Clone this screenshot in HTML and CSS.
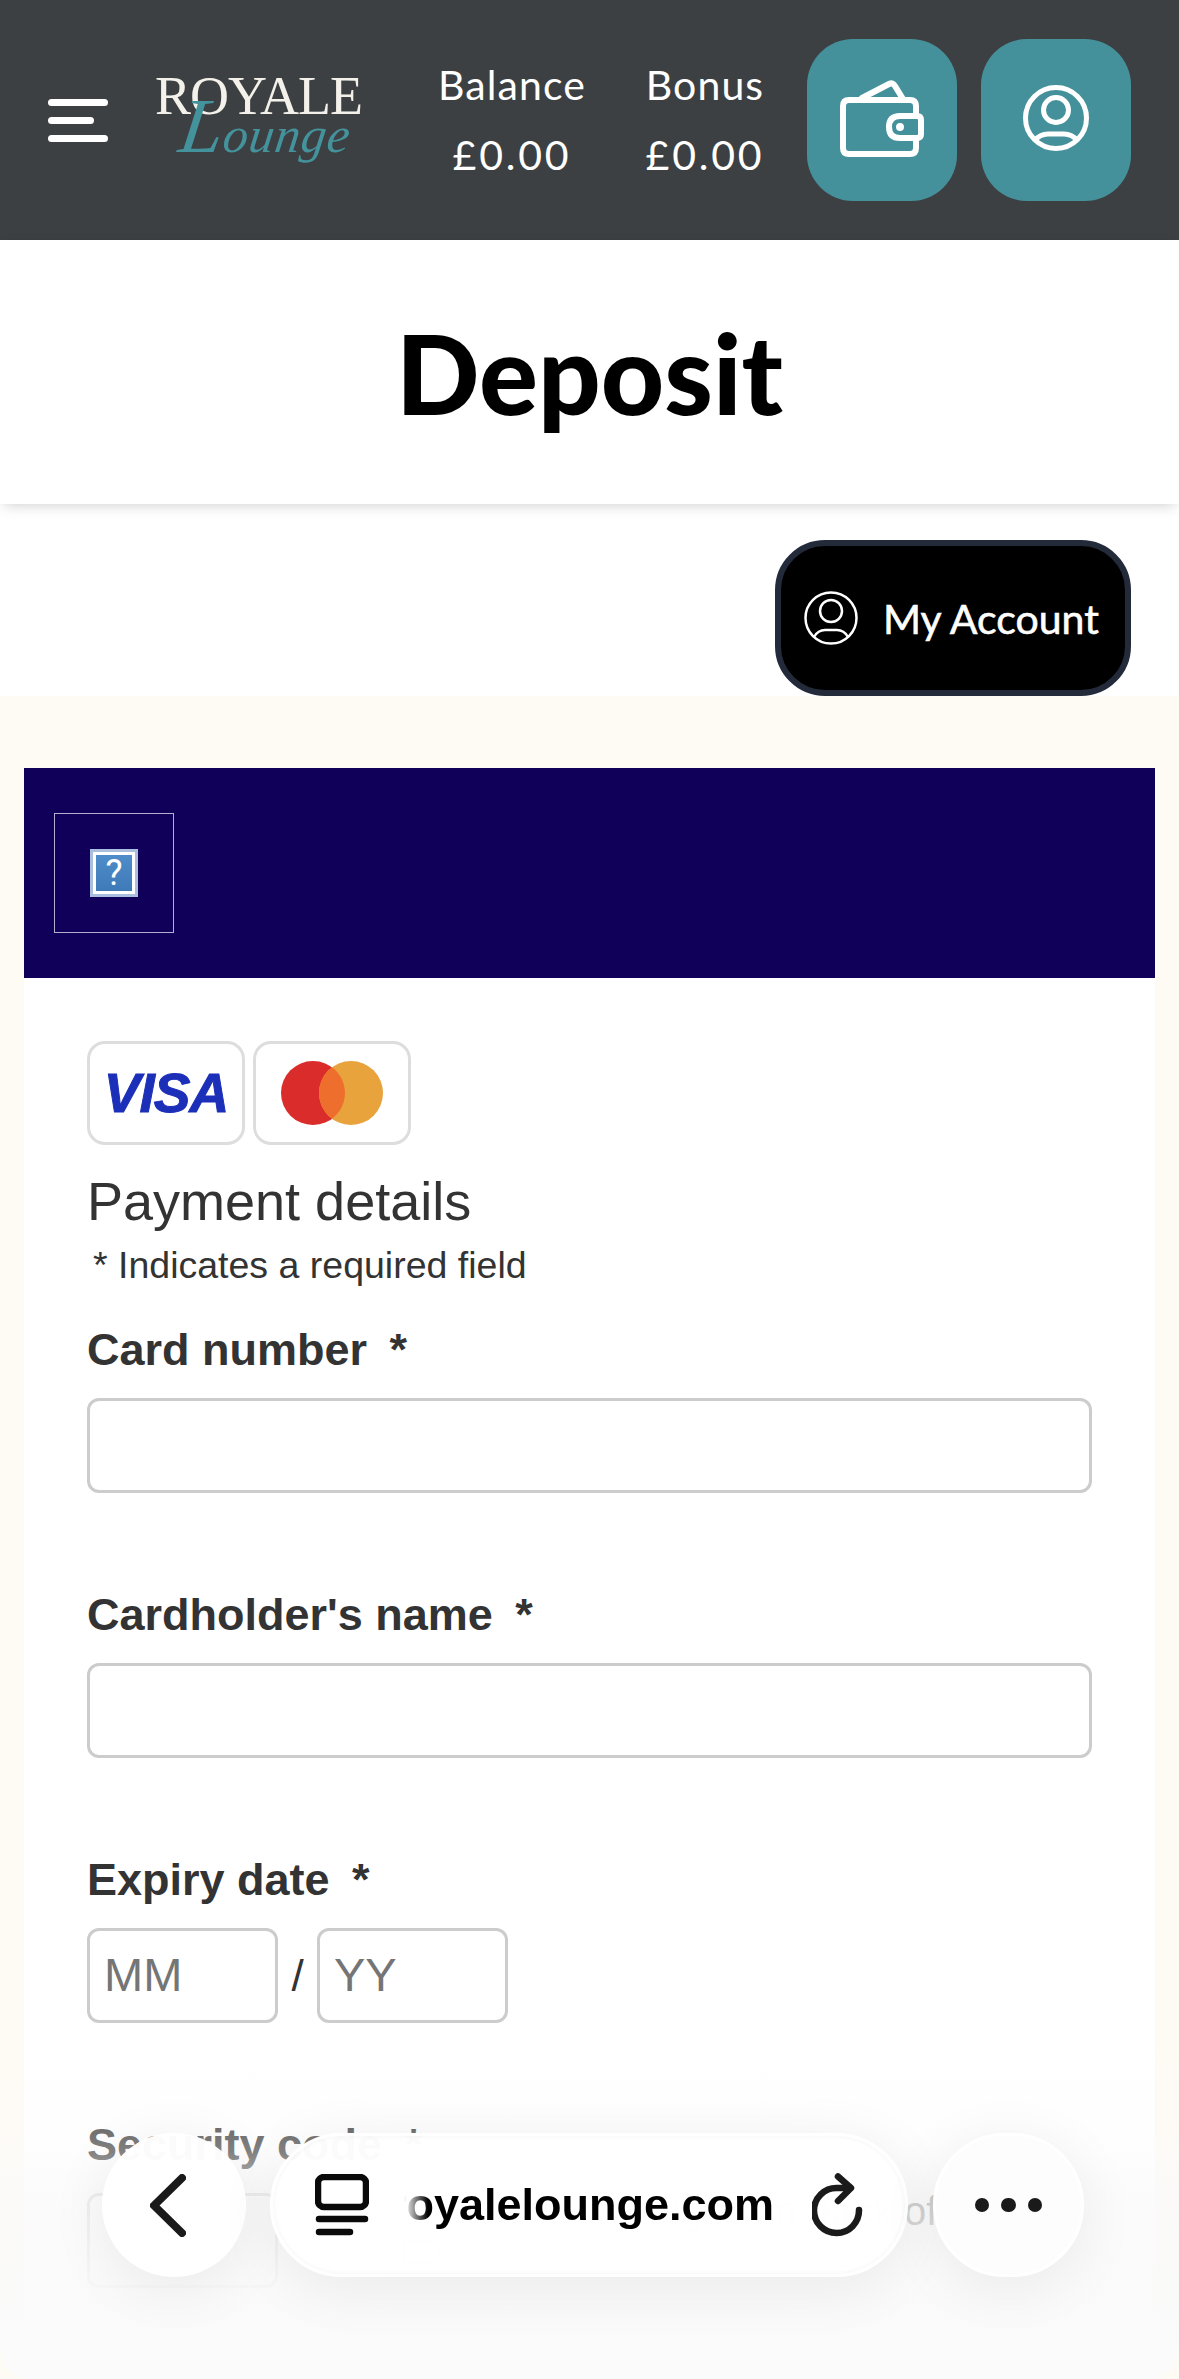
FILE: index.html
```html
<!DOCTYPE html>
<html lang="en">
	<head>
		<meta charset="utf-8">
		<meta name="viewport" content="width=device-width, initial-scale=1">
		<title>Deposit - Royale Lounge</title>
		<link rel="stylesheet" href="styles.css">
	</head>
	<body>
		<header class="topbar">
			<button class="burger" aria-label="Menu"><i></i><i class="short"></i><i></i></button>
			<div class="logo">
				<span class="logo-top">ROYALE</span>
				<span class="logo-sub">Lounge</span>
			</div>
			<div class="money">
				<span>Balance</span>
				<span class="amount">£0.00</span>
			</div>
			<div class="money money-bonus">
				<span>Bonus</span>
				<span class="amount">£0.00</span>
			</div>
			<a class="tile tile-wallet" href="#" aria-label="Wallet">
				<svg width="84" height="78" viewBox="0 0 84 78" fill="none" stroke="#fff" stroke-width="6" stroke-linejoin="round" stroke-linecap="round">
					<path d="M22 18 L49 4 Q53 2 55 6 L63 19"/>
					<path d="M76 36 V26 Q76 20 70 20 H9 Q3 20 3 26 V68 Q3 74 9 74 H70 Q76 74 76 68 V58"/>
					<path d="M60 36 H77 Q81 36 81 40 V54 Q81 58 77 58 H60 Q49 58 49 47 Q49 36 60 36 Z"/>
					<circle cx="60" cy="47" r="2" fill="#fff" stroke-width="4"/>
				</svg>
			</a>
			<a class="tile tile-user" href="#" aria-label="Account">
				<svg width="66" height="68" viewBox="0 0 66 68" fill="none" stroke="#fff" stroke-width="5">
					<circle cx="33" cy="34" r="30.500"/>
					<ellipse cx="33" cy="26" rx="12.500" ry="12.500"/>
					<path d="M11 57 Q17 50 25 50 H41 Q49 50 55 57"/>
				</svg>
			</a>
		</header>

		<section class="title">
			<h1>Deposit</h1>
		</section>

		<div class="account-row">
			<a class="account-btn" href="#">
				<svg width="54" height="54" viewBox="0 0 54 54" fill="none" stroke="#fff" stroke-width="2.500">
					<circle cx="27" cy="27" r="25.500"/>
					<circle cx="27" cy="20" r="11"/>
					<path d="M10 46 Q14 39 21 39 H33 Q40 39 44 46"/>
				</svg>
				My Account
			</a>
		</div>

		<main class="page">
			<div class="merchant">
				<div class="merchant-logo">
					<span class="broken-img">?</span>
				</div>
			</div>
			<div class="card">
				<div class="schemes">
					<span class="scheme"><span class="visa">VISA</span></span>
					<span class="scheme">
						<svg width="104" height="68" viewBox="0 0 104 68">
							<circle cx="33" cy="34" r="32" fill="#d92c2b"/>
							<circle cx="71" cy="34" r="32" fill="#e9a33c"/>
							<path d="M52 8.300 A32 32 0 0 1 52 59.700 A32 32 0 0 1 52 8.300 Z" fill="#ee6e2d"/>
						</svg>
					</span>
				</div>
				<h2>Payment details</h2>
				<p class="required-note">* Indicates a required field</p>
				<form>
					<div class="field">
						<label class="label" for="card">Card number <span class="star">*</span></label>
						<input class="input" id="card" type="text">
					</div>
					<div class="field">
						<label class="label" for="holder">Cardholder's name <span class="star">*</span></label>
						<input class="input" id="holder" type="text">
					</div>
					<div class="field">
						<label class="label" for="mm">Expiry date <span class="star">*</span></label>
						<div class="inline-inputs">
							<input class="input input-short" id="mm" type="text" placeholder="MM">
							<span class="slash">/</span>
							<input class="input input-short" type="text" placeholder="YY">
						</div>
					</div>
					<div class="field">
						<label class="label" for="cvv">Security code <span class="star">*</span></label>
						<div class="inline-inputs cvv-row">
							<input class="input input-short" id="cvv" type="text">
							<span class="cvv-mark"></span>
							<span class="cvv-hint">3 digits on back of card</span>
						</div>
					</div>
				</form>
			</div>
		</main>

		<!-- browser toolbar floating over the page -->
		<div class="fade"></div>
		<nav class="toolbar">
			<button class="round round-back" aria-label="Back">
				<svg width="36" height="63" viewBox="0 0 36 63" fill="none" stroke="#1a1a1a" stroke-width="8" stroke-linecap="round" stroke-linejoin="round">
					<path d="M32 4 L4 31.500 L32 59"/>
				</svg>
			</button>
			<div class="urlbar">
				<svg class="tabs-icon" width="54" height="62" viewBox="0 0 54 62" fill="none" stroke="#0a0a0a" stroke-width="6.500" stroke-linecap="round" stroke-linejoin="round">
					<rect x="3" y="3" width="48" height="30" rx="6"/>
					<path d="M4 45 H50 M4 58 H35"/>
				</svg>
				<span class="url"><span>royalelounge.com</span></span>
				<svg class="reload" width="52" height="64" viewBox="0 0 52 64" fill="none" stroke="#1a1a1a" stroke-width="6.500" stroke-linecap="round" stroke-linejoin="round">
					<path d="M47 37 A22.500 22.500 0 1 1 25 15 H36"/>
					<path d="M26 3.500 L39 15 L26 28"/>
				</svg>
			</div>
			<button class="round round-more" aria-label="More">
				<i></i><i></i><i></i>
			</button>
		</nav>
	</body>
</html>
```

FILE: styles.css
```css
* {
	box-sizing: border-box;
}

html, body {
	margin: 0;
	height: 2379px;
	overflow: hidden;
}

body {
	position: relative;
	background: #fff;
	font-family: "Liberation Sans", Arial, sans-serif;
	color: #333;
}

button {
	border: 0;
	padding: 0;
	background: none;
}

/* top bar */
.topbar {
	height: 240px;
	background: #3d4043;
	display: flex;
	align-items: center;
	padding: 0 48px;
	color: #fff;
}

.burger {
	width: 60px;
	display: flex;
	flex-direction: column;
	gap: 11px;
}

.burger i {
	display: block;
	height: 7px;
	border-radius: 4px;
	background: #fff;
}

.burger i.short {
	width: 46px;
}

.logo {
	width: 210px;
	height: 96px;
	margin-left: 47px;
	position: relative;
	margin-top: -2px;
	font-family: "Liberation Serif", serif;
}

.logo-top {
	display: block;
	font-size: 54px;
	line-height: 50px;
	letter-spacing: -1px;
	color: #f4f1ea;
}

.logo-sub {
	position: absolute;
	left: 25px;
	top: 25px;
	display: block;
	font-size: 50px;
	line-height: 60px;
	font-style: italic;
	letter-spacing: 1px;
	color: #44929c;
	transform: skewX(-8deg);
}

.logo-sub::first-letter {
	font-size: 78px;
}

.money {
	width: 150px;
	margin-left: 72px;
	display: flex;
	flex-direction: column;
	align-items: center;
	gap: 22px;
	font-family: Lato, sans-serif;
	font-size: 41px;
	line-height: 48px;
	letter-spacing: 1.100px;
}

.amount {
	letter-spacing: 2.800px;
}

.money-bonus {
	width: 118px;
	margin-left: 59px;
}

.tile {
	width: 150px;
	height: 162px;
	flex: none;
	border-radius: 46px;
	background: #45919b;
	display: flex;
	align-items: center;
	justify-content: center;
}

.tile-wallet {
	margin-left: 43px;
}

.tile-user {
	margin-left: 24px;
}

.tile svg {
	margin-bottom: 2px;
}

.tile-user svg {
	margin-bottom: 4px;
}

/* heading */
.title {
	height: 264px;
	background: #fff;
	display: flex;
	align-items: center;
	justify-content: center;
	box-shadow: 0 4px 14px -4px rgba(0, 0, 0, .22);
	position: relative;
}

.title h1 {
	margin: 0;
	font-family: Lato, sans-serif;
	font-weight: 900;
	font-size: 110px;
	line-height: 120px;
	color: #000;
}

.account-row {
	height: 192px;
	display: flex;
	justify-content: flex-end;
	align-items: flex-end;
	padding-right: 48px;
}

.account-btn {
	width: 356px;
	height: 156px;
	border: 6px solid #232a3a;
	border-radius: 50px;
	background: #000;
	color: #fff;
	display: flex;
	align-items: center;
	gap: 25px;
	padding-left: 23px;
	font-family: Lato, sans-serif;
	font-size: 41px;
	-webkit-text-stroke: .6px #fff;
	text-decoration: none;
}

/* payment page */
.page {
	height: 1683px;
	background: #fefaf4;
	padding: 72px 24px 0;
}

.merchant {
	height: 210px;
	background: #10005a;
	padding: 45px 30px;
}

.merchant-logo {
	width: 120px;
	height: 120px;
	border: 1px solid #b5b0d0;
	display: flex;
	align-items: center;
	justify-content: center;
}

.broken-img {
	width: 48px;
	height: 48px;
	border: 3px solid #a9bfdd;
	outline: 3px solid #fff;
	outline-offset: -6px;
	background: linear-gradient(#4f8fcb, #3d78b5);
	color: #fff;
	display: flex;
	align-items: center;
	justify-content: center;
	font: 36px Roboto, sans-serif;
}

.card {
	height: 1401px;
	background: #fff;
	padding: 63px 63px 0;
}

.schemes {
	display: flex;
	gap: 8px;
}

.scheme {
	width: 158px;
	height: 104px;
	border: 3px solid #ddd;
	border-radius: 18px;
	display: flex;
	align-items: center;
	justify-content: center;
}

.visa {
	font-weight: 700;
	font-style: italic;
	font-size: 55px;
	letter-spacing: -1px;
	color: #1c2fb8;
	-webkit-text-stroke: 1px #1c2fb8;
}

.card h2 {
	margin: 25px 0 0;
	font-weight: 400;
	font-size: 54px;
	line-height: 62px;
	color: #333;
}

.required-note {
	margin: 11px 0 0 6px;
	font-size: 37.500px;
	line-height: 44px;
}

.field {
	margin-bottom: 95px;
}

.field:first-child {
	margin-top: 36px;
}

.label {
	display: block;
	font-weight: 700;
	font-size: 45px;
	line-height: 54px;
	margin-bottom: 21px;
}

.star {
	margin-left: 10px;
}

.input {
	display: block;
	width: 100%;
	height: 95px;
	border: 3px solid #ccc;
	border-radius: 12px;
	background: #fff;
	padding: 0 14px 3px;
	font: 47px "Liberation Sans", Arial, sans-serif;
}

.input::placeholder {
	color: #757575;
	opacity: 1;
}

.inline-inputs {
	display: flex;
	align-items: center;
	position: relative;
}

.input-short {
	width: 191px;
	flex: none;
}

.slash {
	width: 39px;
	text-align: center;
	font-size: 44px;
}

.cvv-row {
	align-items: flex-start;
}

.cvv-mark {
	width: 36px;
	height: 22px;
	flex: none;
	margin: 48px 0 0 125px;
	border: 2px solid #e33;
}

.cvv-hint {
	margin: -4px 0 0 176px;
	font-size: 40px;
	line-height: 44px;
	color: #555;
	white-space: nowrap;
}

/* browser toolbar */
.fade {
	position: absolute;
	left: 0;
	right: 0;
	bottom: 0;
	height: 379px;
	border-radius: 0 0 30px 30px;
	background: linear-gradient(rgba(251, 251, 251, 0) 13%, rgba(251, 251, 251, .3) 34%, rgba(251, 251, 251, .4) 40%, rgba(250, 250, 250, .72) 51%, rgba(250, 250, 250, .96) 79%, #fbfbfb);
}

.toolbar {
	position: absolute;
	left: 102px;
	top: 2133px;
	width: 982px;
	height: 144px;
	display: flex;
	gap: 24px;
}

.round, .urlbar {
	height: 144px;
	border-radius: 72px;
	background: rgba(255, 255, 255, .97);
	box-shadow: 0 10px 60px rgba(0, 0, 0, .07);
}

.round {
	width: 144px;
	flex: none;
	display: flex;
	align-items: center;
	justify-content: center;
}

.round-back svg {
	margin-right: 12px;
}

.urlbar {
	flex: 1;
	min-width: 0;
	display: flex;
	align-items: center;
	padding: 0 41px 0 42px;
	border: 3px solid #fff;
	box-shadow: 0 10px 60px rgba(0, 0, 0, .07), inset 0 0 5px rgba(0, 0, 0, .05);
}

.tabs-icon {
	flex: none;
}

.url {
	flex: 1;
	min-width: 0;
	margin: 0 38px 0 35px;
	overflow: hidden;
	display: flex;
	justify-content: flex-end;
	white-space: nowrap;
	font-weight: 700;
	font-size: 45px;
	color: #000;
	-webkit-mask-image: linear-gradient(90deg, transparent, #000 24px);
	mask-image: linear-gradient(90deg, transparent, #000 24px);
}

.url span {
	flex: none;
}

.reload {
	flex: none;
}

.round-more {
	gap: 12px;
	width: 151px;
	margin-left: 1px;
	background: #fdfdfd;
	border: 3px solid #fff;
}

.round-more i {
	width: 14.500px;
	height: 14.500px;
	border-radius: 50%;
	background: #1a1a1a;
}
```
